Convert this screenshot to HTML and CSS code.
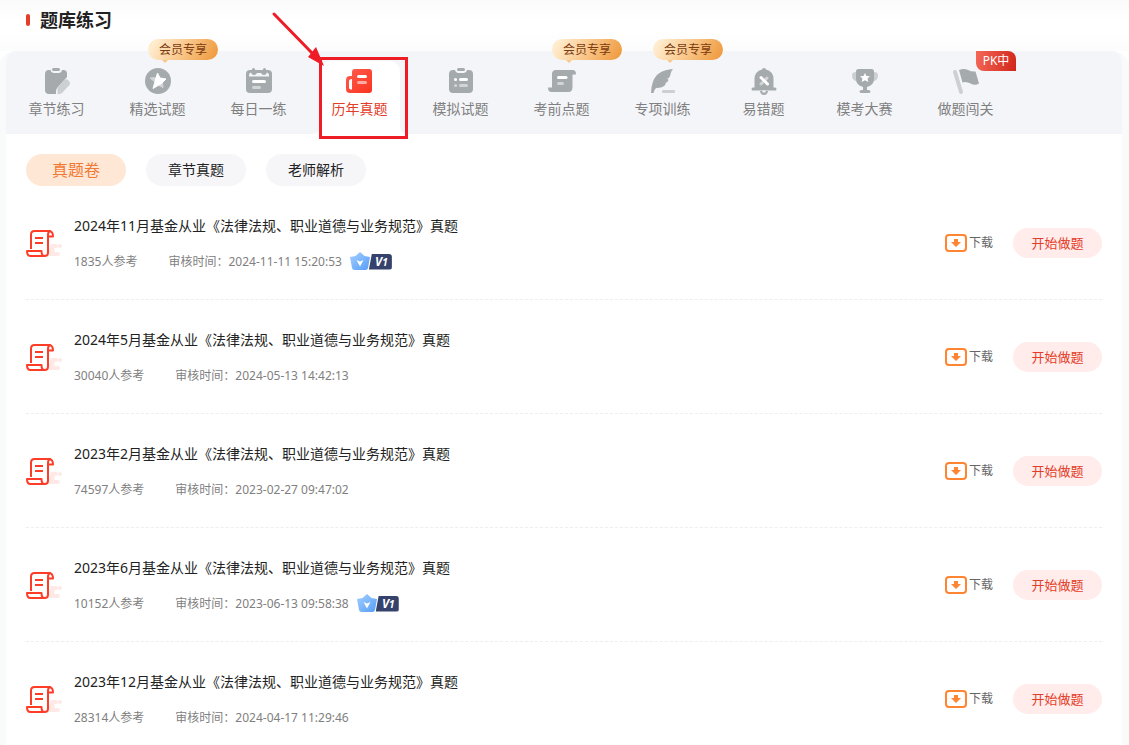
FILE: index.html
```
<!DOCTYPE html>
<html lang="zh-CN">
<head>
    <meta charset="UTF-8">
    <meta name="viewport" content="width=device-width, initial-scale=1.0">
    <title>题库练习</title>
    <link rel="stylesheet" href="styles.css">
</head>
<body>
    <svg class="sprite" aria-hidden="true">
        <defs>
            <linearGradient id="crown-fill" x1="0" y1="0" x2="1" y2="1">
                <stop offset="0" stop-color="#a5d0ff"/>
                <stop offset="1" stop-color="#559df8"/>
            </linearGradient>
            <linearGradient id="red-fill" x1="0" y1="0" x2="1" y2="1">
                <stop offset="0" stop-color="#ff5f4f"/>
                <stop offset="1" stop-color="#fa3320"/>
            </linearGradient>
        </defs>
        <symbol id="icon-paper" viewBox="0 0 36 28">
            <path d="M25 15h5a2 2 0 0 1 0 4h-1.500v4h-6z" fill="#ffe9e7"/>
            <rect x="20" y="23" width="14" height="4" rx="2" fill="#ffe9e7"/>
            <circle cx="34" cy="17" r="2" fill="#ffe9e7"/>
            <g fill="none" stroke="#fd3d28" stroke-width="2" stroke-linejoin="round">
                <path d="M5 20V5.500Q5 2 8.500 2H24Q22 2.500 22 6.500V23.500Q22 27 18.500 27H4.500Q1 27 1 22H15.500Q15.500 27 18.500 27" fill="#fff"/>
                <path d="M23.500 2Q27 2.500 27 7.500H23"/>
                <path d="M9 9h8M9 14h8"/>
            </g>
        </symbol>
        <symbol id="icon-download" viewBox="0 0 22 18">
            <rect x="1" y="1" width="20" height="16" rx="3" fill="none" stroke="#ff8533" stroke-width="2"/>
            <path d="M9 5h4v3h3l-5 5-5-5h3z" fill="#ff8533"/>
        </symbol>
        <symbol id="icon-crown" viewBox="0 0 20 19">
            <path d="M0 5l5.500-1L10 0l4.500 4L20 5l-2 11q-.5 2-2.500 2h-11q-2 0-2.500-2z" fill="url(#crown-fill)"/>
            <path d="M6.500 8l3.500 1.500L13.500 8 10 14.500z" fill="#fff"/>
        </symbol>
    </svg>

    <header class="page-header">
        <h1>题库练习</h1>
    </header>

    <main class="card">
        <nav class="tabs">
            <a href="#" class="tab">
                <svg class="tab-icon" viewBox="0 0 28 28">
                    <path d="M6 3h1.500A3.500 3.500 0 0 0 10.500 6h5A3.500 3.500 0 0 0 19 3h1.500Q24 3 24 6.500v3.500L14.500 20.500q-2 2-1.500 6.500H6q-4 0-4-4V7q0-4 4-4z" fill="#a5aaad"/>
                    <rect x="9" y="1" width="8" height="3" rx="1.500" fill="#a5aaad"/>
                    <path d="M20.500 13.500q2.500-2.500 5 0t1 4.500l-7.500 8q-1 1-2.500 1H14.500v-5q0-1.500 1-2.500z" fill="#cdd0d3"/>
                </svg>
                <span>章节练习</span>
            </a>
            <a href="#" class="tab">
                <svg class="tab-icon" viewBox="0 0 28 28">
                    <circle cx="14" cy="14" r="13" fill="#a5aaad"/>
                    <path d="M6 11l5.500-.5 7 4 .5 6-5-2.500-3-3z" fill="#d2d5d7" stroke="#d2d5d7" stroke-linejoin="round"/>
                    <path d="M13.500 6l2.500 5 6 1-4.500 4.500L9 21.500l2-7z" fill="#fff" stroke="#fff" stroke-linejoin="round"/>
                </svg>
                <span>精选试题</span>
                <em class="vip-tip">会员专享</em>
            </a>
            <a href="#" class="tab">
                <svg class="tab-icon" viewBox="0 0 28 28">
                    <path d="M5 3h18q4 0 4 4v15q0 4-4 4H5q-4 0-4-4V7q0-4 4-4z" fill="#a5aaad"/>
                    <path d="M4 9.500V8q0-2 2-2.500Q7 8 9 8t3-2h4q1 2 3 2t3-2.500q2 .5 2 2.500v1.500z" fill="#f4f5f9"/>
                    <path d="M8.500 2.500v3M19.500 2.500v3" stroke="#a5aaad" stroke-width="3" stroke-linecap="round"/>
                    <path d="M8.500 14.500h11" stroke="#fff" stroke-width="3" stroke-linecap="round"/>
                    <path d="M8.500 20.500h6" stroke="#d2d5d7" stroke-width="3" stroke-linecap="round"/>
                </svg>
                <span>每日一练</span>
            </a>
            <a href="#" class="tab active">
                <svg class="tab-shape" viewBox="0 0 101 83">
                    <path d="M3 83Q11 83 11 75V22Q11 10 23 10H79Q91 10 91 22V75Q91 83 99 83z" fill="#fff"/>
                </svg>
                <svg class="tab-icon" viewBox="1 0 28 28">
                    <path d="M10 2h14q3 0 3 3v18q0 3-3 3H5q-4 0-4-4V13q0-4 4-4h2V5q0-3 3-3z" fill="url(#red-fill)"/>
                    <path d="M7 12q-3 0-3 2.500v6q0 2 3 2z" fill="#fff"/>
                    <path d="M13.500 9.500h7" stroke="#fff" stroke-width="3" stroke-linecap="round"/>
                    <path d="M13.500 15.500h7" stroke="#ffaca4" stroke-width="3" stroke-linecap="round"/>
                </svg>
                <span>历年真题</span>
                <i class="mark-box"></i>
                <svg class="mark-arrow" viewBox="0 0 54 56">
                    <path d="M3 3l38 39" stroke="#ee1c25" stroke-width="3" stroke-linecap="round"/>
                    <path d="M53 55L37 46l8-10z" fill="#ee1c25"/>
                </svg>
            </a>
            <a href="#" class="tab">
                <svg class="tab-icon" viewBox="0 0 28 28">
                    <path d="M6 3h2A3.500 3.500 0 0 0 11 6h6a3.500 3.500 0 0 0 3-3h2q4 0 4 4v15q0 4-4 4H6q-4 0-4-4V7q0-4 4-4z" fill="#a5aaad"/>
                    <rect x="10" y="1" width="8" height="3" rx="1.500" fill="#a5aaad"/>
                    <path d="M8.500 12.500h.1M13.500 12.500h6" stroke="#fff" stroke-width="3" stroke-linecap="round"/>
                    <path d="M8.500 18.500h.1M13.500 18.500h6" stroke="#d2d5d7" stroke-width="3" stroke-linecap="round"/>
                </svg>
                <span>模拟试题</span>
            </a>
            <a href="#" class="tab">
                <svg class="tab-icon" viewBox="0 0 28 28">
                    <path d="M8 3h17q3 0 3 4.500h-3.500V20q0 5-4 5H3.500Q0 25 0 20.500h4V7q0-4 4-4z" fill="#a5aaad"/>
                    <path d="M10.500 10.500h7.500" stroke="#fff" stroke-width="3" stroke-linecap="round"/>
                    <path d="M10.500 16.500h4" stroke="#d2d5d7" stroke-width="3" stroke-linecap="round"/>
                </svg>
                <span>考前点题</span>
                <em class="vip-tip">会员专享</em>
            </a>
            <a href="#" class="tab">
                <svg class="tab-icon" viewBox="0 0 28 28">
                    <path d="M24 2Q8 3 4 14.500 2 20 2 26h2.500q.5-3 2.500-5 8 0 10-4.500l-1-.5q3-.5 3.500-3.500l-1.500-.5q3-1 3.500-5Q22 4 24 2z" fill="#a5aaad"/>
                    <rect x="13" y="23" width="13" height="3" rx="1" fill="#cdd0d3"/>
                </svg>
                <span>专项训练</span>
                <em class="vip-tip">会员专享</em>
            </a>
            <a href="#" class="tab">
                <svg class="tab-icon" viewBox="0 0 28 28">
                    <path d="M12 2.500q0-1.500 2-1.500t2 1.500q7.500 2 7.500 9.500v8.500H25q1.500 0 1.500 1.500T25 23.500H3Q1.500 23.500 1.500 22T3 20.500h1.500V12Q4.500 4.500 12 2.500z" fill="#a5aaad"/>
                    <path d="M10 24h8q-.5 4-4 4t-4-4z" fill="#a5aaad"/>
                    <path d="M12.500 24.500h3" stroke="#f4f5f9" stroke-width="2"/>
                    <path d="M17 11l-6 6" stroke="#d2d5d7" stroke-width="3" stroke-linecap="round"/>
                    <path d="M11 10.500l6.500 6.500" stroke="#fff" stroke-width="3" stroke-linecap="round"/>
                </svg>
                <span>易错题</span>
            </a>
            <a href="#" class="tab">
                <svg class="tab-icon" viewBox="0 0 28 28">
                    <path d="M5 5Q1 5 1 8q0 6 5 6zM23 5q4 0 4 3 0 6-5 6z" fill="#cdd0d3"/>
                    <path d="M7.500 2h13Q23 2 23 4.500V12q0 6-7 8v3h1.500q2 0 2 1.500t-2 1.500h-7q-2 0-2-1.500t2-1.500H12v-3q-7-2-7-8V4.500Q5 2 7.500 2z" fill="#a5aaad"/>
                    <path d="M14 6l1.500 3 3.500.3-2.500 2.300.8 3.400-3.300-1.700-3.300 1.700.8-3.400L9 9.300l3.500-.3z" fill="#fff"/>
                </svg>
                <span>模考大赛</span>
            </a>
            <a href="#" class="tab">
                <svg class="tab-icon" viewBox="0 0 28 28">
                    <path d="M3 5l6 20" stroke="#cdd0d3" stroke-width="4" stroke-linecap="round"/>
                    <path d="M7 3q5-2 9 0t7.500 1.500L27 16.500Q23 19 18.500 16.500T10.500 15.500z" fill="#a5aaad"/>
                </svg>
                <span>做题闯关</span>
                <em class="pk-tip">PK中</em>
            </a>
        </nav>

        <div class="filters">
            <button type="button" class="filter current">真题卷</button>
            <button type="button" class="filter">章节真题</button>
            <button type="button" class="filter">老师解析</button>
        </div>

        <ul class="papers">
            <li class="paper">
                <svg class="paper-icon"><use href="#icon-paper"/></svg>
                <div class="paper-info">
                    <h2>2024年11月基金从业《法律法规、职业道德与业务规范》真题</h2>
                    <p>
                        <span>1835人参考</span>
                        <span>审核时间：<time>2024-11-11 15:20:53</time></span>
                        <span class="level"><svg><use href="#icon-crown"/></svg><b>V<small>1</small></b></span>
                    </p>
                </div>
                <a href="#" class="download"><svg><use href="#icon-download"/></svg>下载</a>
                <button type="button" class="start">开始做题</button>
            </li>
            <li class="paper">
                <svg class="paper-icon"><use href="#icon-paper"/></svg>
                <div class="paper-info">
                    <h2>2024年5月基金从业《法律法规、职业道德与业务规范》真题</h2>
                    <p>
                        <span>30040人参考</span>
                        <span>审核时间：<time>2024-05-13 14:42:13</time></span>
                    </p>
                </div>
                <a href="#" class="download"><svg><use href="#icon-download"/></svg>下载</a>
                <button type="button" class="start">开始做题</button>
            </li>
            <li class="paper">
                <svg class="paper-icon"><use href="#icon-paper"/></svg>
                <div class="paper-info">
                    <h2>2023年2月基金从业《法律法规、职业道德与业务规范》真题</h2>
                    <p>
                        <span>74597人参考</span>
                        <span>审核时间：<time>2023-02-27 09:47:02</time></span>
                    </p>
                </div>
                <a href="#" class="download"><svg><use href="#icon-download"/></svg>下载</a>
                <button type="button" class="start">开始做题</button>
            </li>
            <li class="paper">
                <svg class="paper-icon"><use href="#icon-paper"/></svg>
                <div class="paper-info">
                    <h2>2023年6月基金从业《法律法规、职业道德与业务规范》真题</h2>
                    <p>
                        <span>10152人参考</span>
                        <span>审核时间：<time>2023-06-13 09:58:38</time></span>
                        <span class="level"><svg><use href="#icon-crown"/></svg><b>V<small>1</small></b></span>
                    </p>
                </div>
                <a href="#" class="download"><svg><use href="#icon-download"/></svg>下载</a>
                <button type="button" class="start">开始做题</button>
            </li>
            <li class="paper">
                <svg class="paper-icon"><use href="#icon-paper"/></svg>
                <div class="paper-info">
                    <h2>2023年12月基金从业《法律法规、职业道德与业务规范》真题</h2>
                    <p>
                        <span>28314人参考</span>
                        <span>审核时间：<time>2024-04-17 11:29:46</time></span>
                    </p>
                </div>
                <a href="#" class="download"><svg><use href="#icon-download"/></svg>下载</a>
                <button type="button" class="start">开始做题</button>
            </li>
        </ul>
    </main>
</body>
</html>
```
FILE: styles.css
```
* {
    box-sizing: border-box;
}

body {
    margin: 0;
    font-family: "Noto Sans", "Noto Sans CJK SC", sans-serif;
    font-size: 14px;
    line-height: 20px;
    color: #222;
    background: #fff;
}

h1, h2, p, ul {
    margin: 0;
    padding: 0;
}

a {
    color: inherit;
    text-decoration: none;
}

button {
    border: none;
    font-family: inherit;
    cursor: pointer;
}

.sprite {
    position: absolute;
    width: 0;
    height: 0;
}

.page-header {
    display: flex;
    align-items: center;
    height: 51px;
    padding: 0 26px 11px;
    background: linear-gradient(#fafafa, #fff 20px, #fff 28px, #fcfcfc);
}

.page-header h1 {
    display: flex;
    align-items: center;
    gap: 10px;
    font-size: 18px;
    line-height: 24px;
}

.page-header h1::before {
    content: "";
    width: 4px;
    height: 12px;
    border-radius: 2px;
    background: #e43d29;
}

.card {
    margin: 0 7px 0 6px;
    border-radius: 10px 10px 0 0;
    background: #fff;
    box-shadow: 0 8px 0 8px #f9fafa;
}

/* top tabs */
.tabs {
    display: flex;
    height: 83px;
    border-radius: 10px 10px 0 0;
    background: #f4f5f9;
}

.tab {
    position: relative;
    display: flex;
    flex-direction: column;
    align-items: center;
    gap: 4px;
    flex: 0 0 101px;
    padding-top: 16px;
    color: #808080;
}

.tab span {
    position: relative;
}

.tab-icon {
    position: relative;
    width: 28px;
    height: 28px;
}

.tab.active {
    color: #e43d29;
}

.tab-shape {
    position: absolute;
    inset: 0;
}

.vip-tip, .pk-tip {
    position: absolute;
    font-size: 12px;
    font-style: normal;
    text-align: center;
}

.vip-tip {
    top: -12px;
    left: 41px;
    width: 70px;
    line-height: 21px;
    border-radius: 11px;
    color: #7a3b10;
    background: linear-gradient(120deg, #ffecce 10%, #f9c88c 50%, #ee9637);
}

.vip-tip::after {
    content: "";
    position: absolute;
    top: 100%;
    left: 14px;
    border: 3px solid transparent;
    border-top-color: #fac68a;
    border-bottom: none;
}

.pk-tip {
    top: 0;
    left: 61px;
    width: 40px;
    line-height: 20px;
    border-radius: 0 8px 0 8px;
    color: #fff;
    background: linear-gradient(100deg, #f46857, #d1261a);
}

.mark-box {
    position: absolute;
    top: 6px;
    left: 10px;
    width: 89px;
    height: 82px;
    border: 3px solid #ee1c25;
}

.mark-arrow {
    position: absolute;
    top: -40px;
    left: -38px;
    width: 54px;
    height: 56px;
}

/* filters */
.filters {
    display: flex;
    gap: 20px;
    padding: 20px 20px 0;
}

.filter {
    width: 100px;
    height: 32px;
    padding: 0 0 2px;
    border-radius: 16px;
    font-size: 14px;
    color: #222;
    background: #f6f6f9;
}

.filter.current {
    font-size: 16px;
    color: #f07a35;
    background: #ffe7d5;
}

/* paper list */
.papers {
    padding: 0 20px;
    list-style: none;
}

.paper {
    display: flex;
    align-items: center;
    height: 114px;
    border-bottom: 1px dashed #eee;
}

.paper-icon {
    width: 36px;
    height: 28px;
    margin-right: 12px;
}

.paper-info {
    flex: 1;
    padding-top: 2px;
}

.paper-info h2 {
    margin-bottom: 16px;
    font-size: 14px;
    font-weight: 400;
}

.paper-info p {
    display: flex;
    align-items: center;
    height: 20px;
    font-size: 12px;
    color: #808080;
}

.paper-info p span + span {
    margin-left: 31px;
}

.paper-info p span + .level {
    display: flex;
    align-items: center;
    margin-left: 8px;
}

.level svg {
    width: 20px;
    height: 19px;
}

.level b {
    width: 23px;
    margin-left: -1px;
    padding-left: 2px;
    border-radius: 0 3px 3px 0;
    font-size: 12px;
    font-style: italic;
    line-height: 15px;
    text-align: center;
    color: #fff;
    background: #35426b;
    clip-path: polygon(3px 0, 100% 0, 100% 100%, 0 100%);
}

.level small {
    font-size: 10px;
}

.download {
    display: flex;
    align-items: center;
    gap: 2px;
    margin-right: 20px;
    font-size: 12px;
    color: #666;
}

.download svg {
    width: 22px;
    height: 18px;
}

.start {
    width: 89px;
    height: 30px;
    padding: 0 0 1px;
    border-radius: 15px;
    font-size: 13px;
    color: #e43d29;
    background: #ffeceb;
}
```
